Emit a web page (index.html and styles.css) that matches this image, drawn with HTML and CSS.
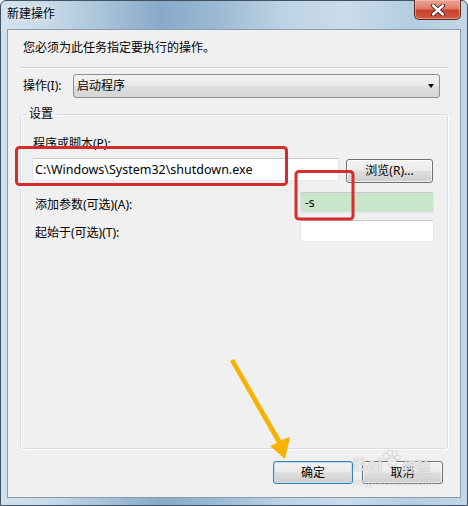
FILE: index.html
```html
<!DOCTYPE html>
<html lang="zh-CN">
<head>
<meta charset="utf-8">
<title>新建操作</title>
<link rel="stylesheet" href="styles.css">
</head>
<body>
<div class="window">
  <div class="titlebar">
    <span class="title">新建操作</span>
    <button class="close" aria-label="关闭">
      <svg width="16" height="12" viewBox="0 0 16 12"><path d="M3 1.5 L13 10.5 M13 1.5 L3 10.5" stroke="#3b2020" stroke-width="4.2" stroke-linecap="round"/><path d="M3 1.5 L13 10.5 M13 1.5 L3 10.5" stroke="#fff" stroke-width="2.4" stroke-linecap="round"/></svg>
    </button>
  </div>
  <div class="client">
    <p class="intro">您必须为此任务指定要执行的操作。</p>
    <div class="sep"></div>
    <div class="action-row">
      <span class="action-label">操作(I):</span>
      <div class="combo"><span>启动程序</span><span class="arrow"></span></div>
    </div>
    <fieldset class="group">
      <legend>设置</legend>
      <div class="prog-label">程序或脚本(P):</div>
      <div class="prog-row">
        <div class="field prog">C:\Windows\System32\shutdown.exe</div>
        <button class="btn browse">浏览(R)...</button>
      </div>
      <div class="arg-row first">
        <span class="arg-label">添加参数(可选)(A):</span>
        <div class="field small green">-s</div>
      </div>
      <div class="arg-row second">
        <span class="arg-label">起始于(可选)(T):</span>
        <div class="field small tall"></div>
      </div>
    </fieldset>
    <div class="buttons">
      <button class="btn ok">确定</button>
      <button class="btn cancel">取消</button>
    </div>
  </div>
  <svg class="marks" width="468" height="506" viewBox="0 0 468 506">
    <rect x="16.5" y="147.5" width="270" height="37" rx="3" fill="none" stroke="#d92b28" stroke-width="3"/>
    <rect x="296" y="171.5" width="57" height="47.5" rx="3" fill="none" stroke="#d92b28" stroke-width="3"/>
    <polygon points="230,361 234,359 281,440 290,437 285,459 270,446 277,443" fill="#f7b200"/>
  </svg>
  <div class="watermark">
    <div class="wm-logo">Bai<svg class="paw" width="18" height="16" viewBox="0 0 18 16"><circle cx="4" cy="6" r="2.2"/><circle cx="8" cy="3" r="2.2"/><circle cx="12.5" cy="3.5" r="2.2"/><circle cx="15.5" cy="7.5" r="2"/><ellipse cx="10" cy="12" rx="4.5" ry="3.5"/></svg><span class="wm-cn">经验</span></div>
    <div class="wm-url">jingyan.baidu.com</div>
  </div>
</div>
</body>
</html>
```

FILE: styles.css
```css
* { box-sizing: border-box; }
html, body { margin: 0; padding: 0; }
body {
  width: 468px;
  height: 506px;
  overflow: hidden;
  font-family: "Noto Sans", "Noto Sans CJK SC", sans-serif;
  font-size: 12px;
  color: #000;
  background: #fff;
}
.window {
  position: relative;
  width: 468px;
  height: 506px;
  border: 1px solid #3e5263;
  border-radius: 6px 6px 0 0;
  padding: 0 6px 7px;
  display: flex;
  flex-direction: column;
  background: linear-gradient(90deg, #d3e1ec 0%, #c8dae8 10%, #a8c3da 22%, #88aac9 34%, #9ab9d4 46%, #bcd2e3 60%, #cbdcea 74%, #b4cde0 88%, #c3d7e6 100%);
}
.titlebar {
  height: 28px;
  display: flex;
  align-items: center;
  padding-bottom: 2px;
}
.title {
  font-size: 12px;
  line-height: 16px;
  color: #000;
  text-shadow: 0 0 6px rgba(255,255,255,0.9);
}
.close {
  margin-left: auto;
  align-self: flex-start;
  margin-top: -1px;
  width: 47px;
  height: 20px;
  padding: 0;
  border: 1px solid #5a2a22;
  border-top: none;
  border-radius: 0 0 5px 5px;
  background: linear-gradient(#eaa597 0%, #de7a66 45%, #c9412c 55%, #d25a43 100%);
  box-shadow: inset 0 0 0 1px rgba(255,200,190,0.5);
  display: flex;
  align-items: center;
  justify-content: center;
}
.client {
  flex: 1;
  background: #f0f0f0;
  border: 1px solid #8a9cab;
  display: flex;
  flex-direction: column;
  padding: 10px 17px 13px 15px;
}
.intro {
  margin: 0;
  line-height: 16px;
}
.sep {
  margin: 11px -4px 0 -3px;
  border-top: 1px solid #d0d0d0;
  border-bottom: 1px solid #fff;
}
.action-row {
  margin-top: 5px;
  height: 24px;
  display: flex;
  align-items: center;
}
.action-label {
  width: 50px;
  line-height: 16px;
}
.combo {
  flex: 1;
  margin-right: 3px;
  height: 24px;
  border: 1px solid #8e8f8f;
  border-radius: 3px;
  background: linear-gradient(#f2f2f2 0%, #ebebeb 45%, #dedede 55%, #d6d6d6 100%);
  display: flex;
  align-items: center;
  padding-left: 3px;
  padding-right: 5px;
  line-height: 16px;
}
.arrow {
  margin-left: auto;
  width: 0;
  height: 0;
  border-left: 3.5px solid transparent;
  border-right: 3.5px solid transparent;
  border-top: 4px solid #000;
}
.group {
  flex: 1;
  margin: 8px -5px 0 -3px;
  padding: 0 13px 0 11px;
  border: 1px solid #d5dfe5;
  border-radius: 3px;
  box-shadow: 1px 1px 0 #fff, inset 1px 1px 0 #fff;
  min-width: 0;
}
.group legend {
  margin-left: -5px;
  padding: 0 2px;
  line-height: 16px;
}
.prog-label {
  margin-top: 14px;
  padding-left: 1px;
  line-height: 16px;
}
.prog-row {
  margin-top: 6px;
  display: flex;
  align-items: flex-start;
  gap: 7px;
}
.field {
  background: #fff;
  border: 1px solid;
  border-color: #c5c8ce #e2e5ea #e3e9ef #e2e4ea;
  border-radius: 2px;
  display: flex;
  align-items: center;
  line-height: 16px;
}
.field.prog {
  width: 307px;
  height: 23px;
  padding-left: 2px;
  font-size: 12.5px;
}
.arg-row {
  display: flex;
  justify-content: space-between;
  align-items: flex-start;
}
.arg-row.first { margin-top: 9px; }
.arg-row.second { margin-top: 7px; }
.arg-label {
  padding-top: 5px;
  padding-left: 3px;
  line-height: 16px;
}
.field.small {
  width: 134px;
  height: 21px;
  padding-left: 4px;
}
.field.tall { height: 22px; }
.field.green { background: #c9e6cb; }
.btn {
  font-family: "Noto Sans", "Noto Sans CJK SC", sans-serif;
  font-size: 12px;
  line-height: 16px;
  color: #000;
  padding: 0;
  border: 1px solid #707070;
  border-radius: 3px;
  background: linear-gradient(#f2f2f2 0%, #ebebeb 48%, #dddddd 52%, #cfcfcf 100%);
  box-shadow: inset 0 0 0 1px rgba(255,255,255,0.7);
}
.browse {
  width: 87px;
  height: 24px;
  margin-top: 1px;
}
.buttons {
  margin-top: 12px;
  display: flex;
  justify-content: flex-end;
  gap: 9px;
}
.ok, .cancel {
  width: 80px;
  height: 23px;
}
.cancel { width: 81px; }
.ok {
  border-color: #3c7fb1;
  box-shadow: inset 0 0 0 1px #b8e1f5;
}
.marks {
  position: absolute;
  left: -1px;
  top: -1px;
  pointer-events: none;
}
.watermark {
  position: absolute;
  left: 352px;
  top: 449px;
  width: 96px;
  pointer-events: none;
  color: rgba(255,255,255,0.75);
}
.wm-logo {
  display: flex;
  align-items: flex-end;
  font-family: "Liberation Sans", sans-serif;
  font-size: 19px;
  font-weight: bold;
  line-height: 22px;
  text-shadow: 0 0 1px rgba(90,90,90,0.6);
}
.wm-logo .paw {
  fill: rgba(255,255,255,0.8);
  margin: 0 3px 10px -1px;
  filter: drop-shadow(0 0 1px rgba(90,90,90,0.6));
}
.wm-cn {
  font-family: "Noto Sans CJK SC", sans-serif;
  font-size: 14px;
  line-height: 20px;
}
.wm-url {
  font-size: 9px;
  line-height: 11px;
  letter-spacing: 0.3px;
  color: rgba(255,255,255,0.6);
  text-shadow: 0 0 1px rgba(120,120,120,0.5);
}
```
